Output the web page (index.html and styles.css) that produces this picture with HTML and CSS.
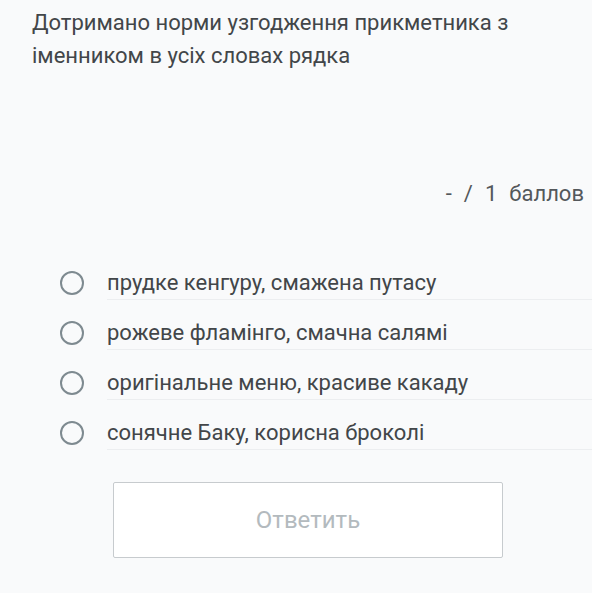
FILE: index.html
```html
<!DOCTYPE html>
<html lang="uk">
<head>
<meta charset="utf-8">
<link rel="stylesheet" href="styles.css">
</head>
<body>
<div class="page">
  <p class="question">Дотримано норми узгодження прикметника з іменником в усіх словах рядка</p>
  <div class="score"><span>-</span><span>/</span><span>1</span><span>баллов</span></div>
  <ul class="options">
    <li class="option"><span class="radio"></span><span class="label">прудке кенгуру, смажена путасу</span></li>
    <li class="option"><span class="radio"></span><span class="label">рожеве фламінго, смачна салямі</span></li>
    <li class="option"><span class="radio"></span><span class="label">оригінальне меню, красиве какаду</span></li>
    <li class="option"><span class="radio"></span><span class="label">сонячне Баку, корисна броколі</span></li>
  </ul>
  <div class="actions"><button class="submit" type="button">Ответить</button></div>
</div>
</body>
</html>
```
FILE: styles.css
```css
html, body {
  margin: 0;
  padding: 0;
  background: #f9fafb;
}
body {
  font-family: Roboto, "Noto Sans", sans-serif;
  color: #424649;
  width: 592px;
  height: 593px;
  overflow: hidden;
}
.page {
  padding: 6px 0 0 0;
}
.question {
  margin: 0;
  padding: 0 30px 0 32px;
  font-size: 22px;
  line-height: 33px;
}
.score {
  margin-top: 107px;
  padding-right: 8px;
  display: flex;
  justify-content: flex-end;
  gap: 12px;
  font-size: 22px;
  line-height: 30px;
  color: #54585b;
}
.options {
  list-style: none;
  margin: 41px 0 0 0;
  padding: 0;
}
.option {
  display: flex;
  align-items: flex-start;
  height: 50px;
}
.radio {
  box-sizing: border-box;
  width: 24px;
  height: 24px;
  border: 2.5px solid #7e8a90;
  border-radius: 50%;
  margin: 21px 23px 0 60px;
  flex: none;
}
.label {
  flex: 1;
  box-sizing: border-box;
  height: 50px;
  padding-top: 17px;
  font-size: 22px;
  line-height: 31px;
  border-bottom: 1px solid #eceef0;
}
.actions {
  margin-top: 32px;
  padding-left: 113px;
}
.submit {
  display: block;
  width: 390px;
  height: 76px;
  background: #ffffff;
  border: 1px solid #c7cbce;
  border-radius: 2px;
  font-family: Roboto, "Noto Sans", sans-serif;
  font-size: 24px;
  color: #b3babe;
  padding: 0;
}
```
